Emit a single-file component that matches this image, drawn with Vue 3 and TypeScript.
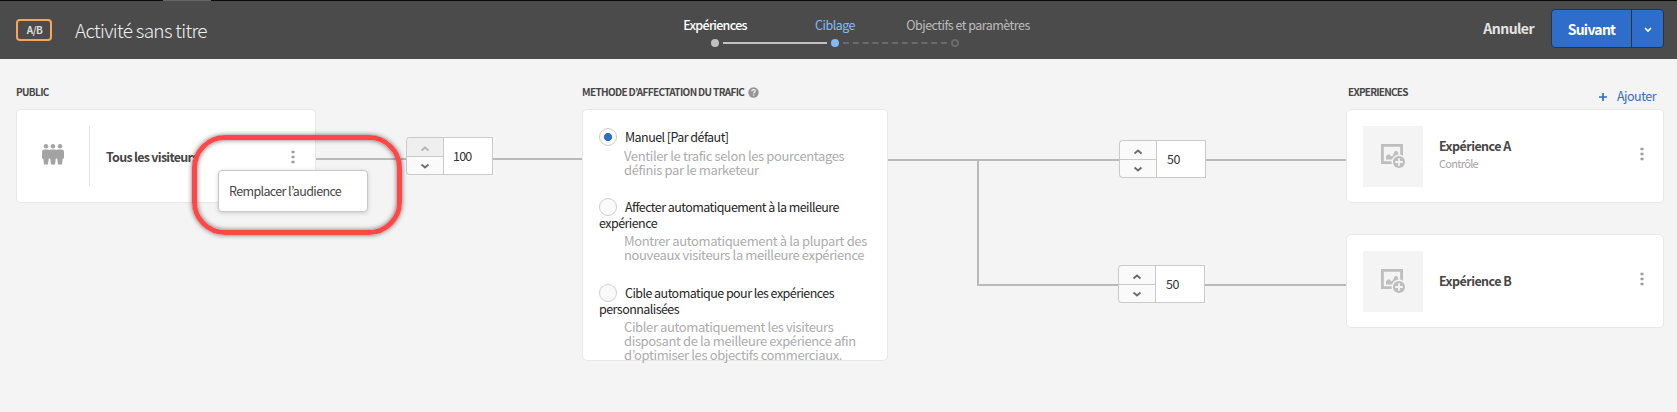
<script setup lang="ts">
interface Option { lines: string[]; desc: string[]; checked: boolean }
interface Experience { name: string; note: string }

const options: Option[] = [
  { lines: ['Manuel [Par défaut]'], desc: ['Ventiler le trafic selon les pourcentages', 'définis par le marketeur'], checked: true },
  { lines: ['Affecter automatiquement à la meilleure', 'expérience'], desc: ['Montrer automatiquement à la plupart des', 'nouveaux visiteurs la meilleure expérience'], checked: false },
  { lines: ['Cible automatique pour les expériences', 'personnalisées'], desc: ['Cibler automatiquement les visiteurs', 'disposant de la meilleure expérience afin', 'd’optimiser les objectifs commerciaux.'], checked: false },
]
const experiences: Experience[] = [
  { name: 'Expérience A', note: 'Contrôle' },
  { name: 'Expérience B', note: '' },
]
const shares: number[] = [50, 50]
</script>

<template>
  <div class="page">
    <header class="bar">
      <div class="tab"></div>
      <div class="left">
        <span class="badge">A/B</span>
        <span class="title">Activité sans titre</span>
      </div>
      <nav class="steps">
        <div class="step done">Expériences</div>
        <div class="step current">Ciblage</div>
        <div class="step next">Objectifs et paramètres</div>
        <svg class="track" width="250" height="10" viewBox="0 0 250 10">
          <circle cx="5" cy="5" r="4" fill="#c1c1c1" />
          <path d="M13 5H117" stroke="#c1c1c1" stroke-width="2" />
          <circle cx="125" cy="5" r="4" fill="#85b9fb" />
          <path d="M133 5H238" stroke="#6b6b6b" stroke-width="2" stroke-dasharray="6 3.8" />
          <circle cx="245" cy="5" r="3" fill="none" stroke="#6b6b6b" stroke-width="2" />
        </svg>
      </nav>
      <div class="actions">
        <span class="cancel">Annuler</span>
        <div class="split">
          <span class="primary">Suivant</span>
          <span class="more"><svg width="8" height="6" viewBox="0 0 8 6"><path d="M1 1L4 4L7 1" fill="none" stroke="#fff" stroke-width="1.6" /></svg></span>
        </div>
      </div>
    </header>

    <main class="flow">
      <section class="public">
        <h2>PUBLIC</h2>
        <div class="card audience">
          <div class="who">
            <svg width="22" height="21" viewBox="0 0 22 21" fill="#a3a3a3">
              <circle cx="4" cy="2.3" r="2.2" /><circle cx="11" cy="2.3" r="2.2" /><circle cx="18" cy="2.3" r="2.200" />
              <path d="M2 5.500H6L7.500 6L9 5.500H13L14.500 6L16 5.500H20Q22 5.500 22 8V14.500H20.700L20 20.500H16L15.200 14.500H13.800L13 20.500H9L8.200 14.500H6.800L6 20.500H2L1.300 14.500H0V8Q0 5.500 2 5.500Z" />
            </svg>
          </div>
          <span class="name">Tous les visiteurs</span>
          <svg class="dots" width="4" height="14" viewBox="0 0 4 14"><path d="M.5 .7h3v2.600h-3zM.5 5.700h3v2.600h-3zM.5 10.700h3v2.600h-3z" fill="#9d9d9d" /></svg>
          <div class="menu">Remplacer l’audience</div>
        </div>
      </section>

      <div class="link first">
        <i class="wire lead"></i>
        <div class="spin locked">
          <div class="keys">
            <b><svg width="10" height="6" viewBox="0 0 10 6"><path d="M1.500 4.500L5 1.500L8.500 4.500" /></svg></b>
            <b><svg width="10" height="6" viewBox="0 0 10 6"><path d="M1.500 1.500L5 4.500L8.500 1.500" /></svg></b>
          </div>
          <span class="value">100</span>
        </div>
        <i class="wire fill"></i>
      </div>

      <section class="method">
        <h2>METHODE D’AFFECTATION DU TRAFIC
          <svg class="help" width="11" height="11" viewBox="0 0 11 11"><circle cx="5.500" cy="5.500" r="5.200" fill="#969696" /><path d="M3.800 4.200Q3.900 2.700 5.500 2.700Q7.200 2.700 7.200 4.100Q7.200 4.900 6.200 5.400Q5.600 5.800 5.600 6.500M5.600 7.400V8.700" fill="none" stroke="#f4f4f4" stroke-width="1.300" /></svg>
        </h2>
        <div class="card choices">
          <div v-for="(o, i) in options" :key="i" class="option" :class="{ on: o.checked }">
            <div class="label"><i class="radio"></i><template v-for="l in o.lines" :key="l">{{ l }}<br></template></div>
            <p><template v-for="d in o.desc" :key="d">{{ d }}<br></template></p>
          </div>
        </div>
      </section>

      <div class="link fork">
        <div v-for="(share, i) in shares" :key="i" class="lane">
          <i :class="i === 0 ? 'wire run' : 'elbow'"></i>
          <div class="spin">
            <div class="keys">
              <b><svg width="10" height="6" viewBox="0 0 10 6"><path d="M1.500 4.500L5 1.500L8.500 4.500" /></svg></b>
              <b><svg width="10" height="6" viewBox="0 0 10 6"><path d="M1.500 1.500L5 4.500L8.500 1.500" /></svg></b>
            </div>
            <span class="value">{{ share }}</span>
          </div>
          <i class="wire fill"></i>
        </div>
      </div>

      <section class="results">
        <h2>EXPERIENCES
          <span class="add"><svg width="8" height="8" viewBox="0 0 8 8"><path d="M4 0V8M0 4H8" stroke="#2f6dca" stroke-width="1.700" /></svg>Ajouter</span>
        </h2>
        <div v-for="e in experiences" :key="e.name" class="card exp">
          <div class="thumb">
            <svg width="25" height="25" viewBox="0 0 25 25">
              <path d="M1.400 1.400H20.600V18.600H1.400Z" fill="none" stroke="#bebebe" stroke-width="2.800" />
              <path d="M5 15.500V12.500Q7.500 8.500 9.500 11.500L10.500 12.500Q11.500 12.500 12.500 10Q14.500 4.500 16.500 8L17.500 10V15.500Z" fill="#bebebe" />
              <circle cx="18" cy="18" r="7.500" fill="#f4f4f4" />
              <circle cx="18" cy="18" r="6.100" fill="#bebebe" /><path d="M18 14.200V21.800M14.200 18H21.800" stroke="#f4f4f4" stroke-width="1.800" />
            </svg>
          </div>
          <div class="info"><span class="name">{{ e.name }}</span><span v-if="e.note" class="note">{{ e.note }}</span></div>
          <svg class="dots" width="4" height="14" viewBox="0 0 4 14"><path d="M.5 .7h3v2.600h-3zM.5 5.700h3v2.600h-3zM.5 10.700h3v2.600h-3z" fill="#9d9d9d" /></svg>
        </div>
      </section>
    </main>
    <div class="highlight"></div>
  </div>
</template>

<style>
body { background: #f4f4f4; }
</style>
<style scoped>
* { box-sizing: border-box; }
svg { display: block; flex: none; }
.page { position: relative; width: 1677px; height: 412px; overflow: hidden; background: #f4f4f4; font: 12.5px/16px "Noto Sans CJK KR", "Noto Sans", sans-serif; letter-spacing: -.55px; color: #464646; white-space: nowrap; }
.bar { position: relative; display: flex; justify-content: space-between; height: 59px; padding: 0 13px 0 16px; background: #4b4b4b; border-top: 1px solid #0c0c0c; }
.tab { position: absolute; left: 163px; top: -1px; width: 48px; height: 1px; background: #666; }
.left { display: flex; align-items: flex-start; width: 500px; }
.badge { width: 36px; height: 22px; margin-top: 18px; padding-left: 1px; border: 2px solid #f9a556; border-radius: 4px; font-size: 10px; line-height: 17px; font-weight: 700; text-align: center; color: #dcdcdc; }
.title { margin: 17px 0 0 23px; font-size: 19px; line-height: 24px; font-weight: 300; letter-spacing: -.7px; color: #f0f0f0; }
.steps { position: absolute; left: 655px; top: 16px; display: grid; grid-template-columns: 120px 120px 147px; width: 387px; text-align: center; }
.step { display: flex; justify-content: center; line-height: 16px; color: #bcbcbc; letter-spacing: -.52px; }
.done { color: #fff; font-weight: 500; letter-spacing: -.7px; }
.next { margin-left: -1px; }
.current { color: #85b9fb; }
.track { grid-column: 1 / 4; margin: 5px 0 0 55px; }
.actions { display: flex; align-items: flex-start; }
.cancel { margin: 17px 17px 0 0; font-size: 14px; line-height: 20px; font-weight: 700; color: #e4e4e4; }
.split { display: flex; width: 113px; height: 39px; margin-top: 8px; border: 1px solid #323232; border-radius: 4px; background: #2f6dca; color: #fff; font-size: 14px; font-weight: 700; letter-spacing: -.75px; }
.primary { width: 79px; line-height: 38px; text-align: center; }
.more { flex: 1; display: flex; align-items: center; justify-content: center; border-left: 1px solid #323232; padding-top: 3px; }
.flow { display: flex; align-items: flex-start; padding: 25px 13px 0 16px; }
h2 { display: flex; align-items: flex-start; margin: 0; height: 25px; font-size: 10px; line-height: 16px; font-weight: 700; letter-spacing: -.65px; }
.card { background: #fff; border: 1px solid #e8e8e8; border-radius: 5px; }
.public { width: 300px; }
.audience { position: relative; display: flex; height: 94px; }
.who { display: flex; width: 73px; height: 60px; margin-top: 16px; padding: 18px 0 0 25px; border-right: 1px solid #e1e1e1; }
.audience .name { margin: 39px 0 0 16px; letter-spacing: -.72px; }
.name { font-weight: 700; line-height: 16px; }
.audience .dots { margin: 40px 20px 0 auto; }
.menu { position: absolute; left: 201px; top: 60px; width: 150px; height: 42px; border: 1px solid #c8c8c8; border-radius: 4px; background: #fff; box-shadow: 0 1px 4px rgba(0,0,0,.18); padding: 12px 10px; line-height: 16px; letter-spacing: -.63px; }
.highlight { position: absolute; left: 192px; top: 135px; width: 210px; height: 100px; border: 5px solid #ff4747; border-radius: 33px; box-shadow: 0 0 5px rgba(0,0,0,.55), inset 0 0 5px rgba(0,0,0,.55); }
.link { display: flex; }
.first { width: 266px; padding-top: 53px; }
.wire { height: 2px; background: #bababa; margin-top: 19px; }
.first .wire { margin-top: 21px; }
.lead { width: 90px; }
.fill { flex: 1; }
.spin { display: flex; width: 87px; height: 38px; }
.keys { width: 37px; border: 1px solid #cacaca; border-right: 0; border-radius: 4px 0 0 4px; background: #fafafa; overflow: hidden; }
.keys b { display: flex; align-items: center; justify-content: center; height: 18px; }
.keys b:first-child { height: 19px; border-bottom: 1px solid #cacaca; padding-top: 3px; }
.keys path { fill: none; stroke: #6a6a6a; stroke-width: 1.8; }
.locked b:first-child { background: #efefef; }
.locked b:first-child path { stroke: #b5b5b5; }
.value { flex: 1; border: 1px solid #cacaca; background: #fff; padding: 10px 0 0 9px; color: #323232; line-height: 16px; }
.locked .value { letter-spacing: -.8px; }
.method { width: 306px; }
.help { margin: 3px 0 0 4px; }
.choices { height: 252px; padding: 19px 0 0 16px; }
.option { color: #262626; }
.option + .option { margin-top: 22px; }
.option + .option + .option { margin-top: 23px; }
.label { line-height: 16px; }
.radio { display: inline-block; width: 18px; height: 18px; margin: -1px 8px -1px 0; vertical-align: top; border: 1px solid #cfcfcf; border-radius: 50%; background: #fafafa; }
.on .radio { background: radial-gradient(circle, #2f6dca 3.700px, #fafafa 4.400px); }
.option p { margin: 3px 0 0 25px; font-size: 13px; line-height: 14px; letter-spacing: -.38px; color: #acacac; }
.option.on p { margin-top: 4px; }
.fork { flex: 1; flex-direction: column; padding-top: 56px; gap: 87px; }
.lane { display: flex; align-items: flex-start; height: 38px; }
.lane .value { padding-left: 10px; }
.run { width: 231px; }
.elbow { width: 141px; height: 125px; margin: -104px 0 0 89px; border-left: 2px solid #bababa; border-bottom: 2px solid #bababa; }
.results { width: 318px; }
.results h2 { padding-left: 2px; letter-spacing: -.75px; }
.add { display: flex; margin: 4px 8px 0 auto; gap: 10px; font-size: 12.5px; font-weight: 400; color: #2f6dca; line-height: 16px; letter-spacing: -.5px; }
.add svg { margin-top: 5px; }
.exp { display: flex; height: 94px; padding: 16px; }
.exp + .exp { margin-top: 31px; }
.thumb { width: 60px; height: 61px; padding: 18px; background: #f4f4f4; }
.info { display: flex; flex-direction: column; align-items: flex-start; margin: 12px 0 0 16px; }
.exp + .exp .info { margin-top: 22px; }
.note { font-size: 11px; line-height: 16px; color: #a4a4a4; margin-top: 1px; letter-spacing: -.7px; }
.exp .dots { margin: 21px 3px 0 auto; }
</style>
